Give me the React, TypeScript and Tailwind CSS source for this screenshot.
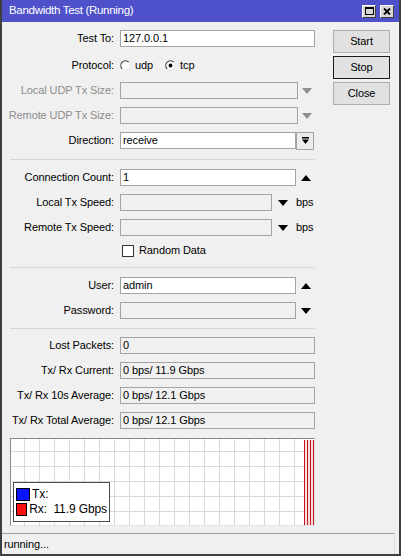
import type { ReactNode } from "react";

// MikroTik-style "Bandwidth Test (Running)" dialog.

function Row({
  label,
  muted = false,
  className = "",
  children,
}: {
  label: string;
  muted?: boolean;
  className?: string;
  children: ReactNode;
}) {
  return (
    <div className={`flex items-center h-[17px] ${className}`}>
      <div className={`w-[112px] text-right whitespace-nowrap ${muted ? "text-[#8d8d8d]" : "text-black"}`}>
        {label}
      </div>
      <div className="ml-[6px] flex items-center">{children}</div>
    </div>
  );
}

function Field({ value = "", width, filled = false }: { value?: string; width: number; filled?: boolean }) {
  return (
    <div
      className={`h-[17px] border border-[#a3a3a3] px-[2px] leading-[15px] whitespace-nowrap overflow-hidden ${
        filled ? "bg-white" : "bg-[#f0f0f0]"
      }`}
      style={{ width }}
    >
      {value}
    </div>
  );
}

function Tri({ up = false, gray = false }: { up?: boolean; gray?: boolean }) {
  return (
    <svg width="10" height="6" viewBox="0 0 10 6">
      <polygon points={up ? "0,6 10,6 5,0" : "0,0 10,0 5,6"} fill={gray ? "#8f8f8f" : "#000"} />
    </svg>
  );
}

// tight = 2px block (line on its 2nd px), default = 4px block (line on its 3rd px)
function Separator({ tight = false }: { tight?: boolean }) {
  return (
    <div className={tight ? "h-[2px] pt-[1px]" : "h-[4px] pt-[2px]"}>
      <div className="ml-[8px] w-[305px] h-px bg-[#d6d6d6]" />
    </div>
  );
}

function Radio({ checked }: { checked: boolean }) {
  return (
    <svg width="11" height="11" viewBox="0 0 11 11">
      <circle cx="5.5" cy="5.5" r="4.6" fill="#fff" />
      <path d="M8.8 2.2 A4.6 4.6 0 0 0 2.2 8.8" stroke="#3a3a3a" strokeWidth="1.1" fill="none" />
      <path d="M2.2 8.8 A4.6 4.6 0 0 0 8.8 2.2" stroke="#e4e4e4" strokeWidth="1" fill="none" />
      {checked && <circle cx="5.5" cy="5.5" r="1.9" fill="#000" />}
    </svg>
  );
}

function WinButton({ label, focused = false }: { label: string; focused?: boolean }) {
  return (
    <div
      className={`h-[23px] w-[57px] flex items-center justify-center bg-[#e1e1e1] border ${
        focused ? "border-[#1a1a1a]" : "border-[#adadad]"
      }`}
    >
      {label}
    </div>
  );
}

function Graph() {
  const vx = Array.from({ length: 20 }, (_, i) => 13 + i * 15);
  const hy = Array.from({ length: 6 }, (_, i) => 12 + i * 15);
  return (
    <div className="relative mt-[1px] ml-[8px] w-[305px] h-[88px] border border-t-[#8a8a8a] border-l-[#8a8a8a] border-b-[#e3e3e3] border-r-[#e3e3e3] bg-white">
      <svg width="303" height="86" viewBox="0 0 303 86" className="block">
        {vx.map((x) => (
          <line key={`v${x}`} x1={x + 0.5} y1="0" x2={x + 0.5} y2="86" stroke="#d9d9d9" strokeWidth="1" />
        ))}
        {hy.map((y) => (
          <line key={`h${y}`} x1="0" y1={y + 0.5} x2="303" y2={y + 0.5} stroke="#d9d9d9" strokeWidth="1" />
        ))}
        <rect x="293" y="1" width="10" height="85" fill="#f6dede" />
        {[293, 296, 299, 302].map((x) => (
          <line key={`r${x}`} x1={x + 0.5} y1="1" x2={x + 0.5} y2="86" stroke="#c4141b" strokeWidth="1" />
        ))}
      </svg>
      <div className="absolute left-[2px] top-[43px] w-[97px] h-[40px] bg-white border border-[#4a4a4a] px-[2px] pt-[4px] flex flex-col gap-[1px]">
        <div className="flex items-center h-[14px]">
          <div className="w-[14px] h-[13px] bg-[#0a14ff] border border-black" />
          <span className="ml-[2px] text-[12px]">Tx:</span>
        </div>
        <div className="flex items-center h-[14px]">
          <div className="w-[14px] h-[13px] bg-[#ff1010] border border-black" />
          <span className="ml-[2px] text-[12px] whitespace-pre">Rx:  11.9 Gbps</span>
        </div>
      </div>
    </div>
  );
}

export default function App() {
  return (
    <div className="w-[401px] h-[556px] flex flex-col bg-[#f0f0f0] border-x-2 border-b-2 border-[#3f3f3f] font-['Liberation_Sans',Arial,sans-serif] text-[11px] tracking-[-0.1px] text-black select-none">
      {/* title bar */}
      <div className="h-[22px] -mx-[2px] px-[7px] flex items-center bg-[#4e51c9] border-x-2 border-[#3f3f3f] shrink-0">
        <span className="text-white text-[11.5px] tracking-[-0.3px] flex-1">Bandwidth Test (Running)</span>
        <div className="flex gap-[4px] mr-[-2px]">
          <div className="w-[14px] h-[13px] bg-[#d6d6d6] border border-t-white border-l-white border-b-[#404040] border-r-[#404040] flex items-center justify-center">
            <div className="w-[9px] h-[8px] border border-black border-t-2" />
          </div>
          <div className="w-[14px] h-[13px] bg-[#d6d6d6] border border-t-white border-l-white border-b-[#404040] border-r-[#404040] flex items-center justify-center">
            <svg width="8" height="7" viewBox="0 0 8 7">
              <path d="M1 0.5 L7 6.5 M7 0.5 L1 6.5" stroke="#000" strokeWidth="1.8" />
            </svg>
          </div>
        </div>
      </div>

      {/* body */}
      <div className="flex-1 flex">
        <div className="w-[320px] pt-[8px] flex flex-col gap-[8px]">
          <Row label="Test To:">
            <Field value="127.0.0.1" width={195} filled />
          </Row>
          <Row label="Protocol:" className="mt-[2px]">
            <div className="flex items-center">
              <Radio checked={false} />
              <span className="ml-[4px]">udp</span>
              <span className="ml-[12px]">
                <Radio checked />
              </span>
              <span className="ml-[4px]">tcp</span>
            </div>
          </Row>
          <Row label="Local UDP Tx Size:" muted>
            <Field width={178} />
            <div className="w-[17px] flex justify-center">
              <Tri gray />
            </div>
          </Row>
          <Row label="Remote UDP Tx Size:" muted>
            <Field width={178} />
            <div className="w-[17px] flex justify-center">
              <Tri gray />
            </div>
          </Row>
          <Row label="Direction:">
            <Field value="receive" width={176} filled />
            <div className="h-[18px] w-[18px] border border-[#a3a3a3] bg-[#ececec] flex items-center justify-center">
              <svg width="7" height="7" viewBox="0 0 7 7">
                <rect x="0" y="0" width="7" height="1.5" fill="#000" />
                <polygon points="0,2.5 7,2.5 3.5,7" fill="#000" />
              </svg>
            </div>
          </Row>

          <Separator />

          <Row label="Connection Count:">
            <Field value="1" width={176} filled />
            <div className="w-[19px] flex justify-center">
              <Tri up />
            </div>
          </Row>
          <Row label="Local Tx Speed:">
            <Field width={152} />
            <div className="w-[22px] flex justify-center">
              <Tri />
            </div>
            <span className="ml-[2px]">bps</span>
          </Row>
          <Row label="Remote Tx Speed:">
            <Field width={152} />
            <div className="w-[22px] flex justify-center">
              <Tri />
            </div>
            <span className="ml-[2px]">bps</span>
          </Row>
          <div className="flex items-center h-[13px] pl-[120px]">
            <div className="w-[12px] h-[12px] border border-[#333] bg-white" />
            <span className="ml-[5px]">Random Data</span>
          </div>

          <Separator />

          <Row label="User:">
            <Field value="admin" width={176} filled />
            <div className="w-[19px] flex justify-center">
              <Tri up />
            </div>
          </Row>
          <Row label="Password:">
            <Field width={176} />
            <div className="w-[19px] flex justify-center">
              <Tri />
            </div>
          </Row>

          <Separator tight />

          <Row label="Lost Packets:">
            <Field value="0" width={195} />
          </Row>
          <Row label="Tx/ Rx Current:">
            <Field value="0 bps/ 11.9 Gbps" width={195} />
          </Row>
          <Row label="Tx/ Rx 10s Average:">
            <Field value="0 bps/ 12.1 Gbps" width={195} />
          </Row>
          <Row label="Tx/ Rx Total Average:">
            <Field value="0 bps/ 12.1 Gbps" width={195} />
          </Row>

          <Graph />
        </div>

        <div className="ml-[11px] pt-[8px] flex flex-col gap-[3px]">
          <WinButton label="Start" />
          <WinButton label="Stop" focused />
          <WinButton label="Close" />
        </div>
      </div>

      {/* status bar */}
      <div className="h-[21px] w-[393px] shrink-0 border-t border-r border-t-[#a0a0a0] border-r-[#dadada] flex items-center pl-[2px]">
        running...
      </div>
    </div>
  );
}
